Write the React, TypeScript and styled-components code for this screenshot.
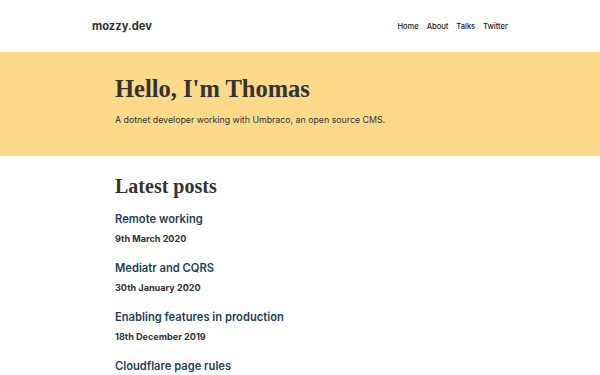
import React from "react";
import styled, { createGlobalStyle } from "styled-components";

const Global = createGlobalStyle`
  html, body { margin: 0; padding: 0; background: #fff; }
  body { font-family: Inter, "Liberation Sans", sans-serif; color: #333; }
  * { box-sizing: border-box; }
`;

const Header = styled.header`
  height: 52px;
  display: flex;
  align-items: center;
  justify-content: space-between;
  width: 416px;
  margin: 0 auto;
`;

const Logo = styled.a`
  font-family: Inter, "Liberation Sans", sans-serif;
  font-weight: 700;
  font-size: 11.2px;
  color: #333;
  text-decoration: none;
`;

const Nav = styled.nav`
  display: flex;
  gap: 7.8px;
`;

const NavLink = styled.a`
  font-size: 7.6px;
  font-weight: 500;
  color: #222;
  text-decoration: none;
`;

const Hero = styled.section`
  background: #fdd98a;
  height: 104px;
`;

const Container = styled.div`
  width: 370px;
  margin: 0 auto;
`;

const HeroInner = styled(Container)`
  padding-top: 22px;
`;

const Title = styled.h1`
  font-family: "Liberation Serif", "DejaVu Serif", serif;
  font-weight: 700;
  font-size: 24.5px;
  line-height: 30px;
  margin: 0;
  color: #333;
`;

const Subtitle = styled.p`
  margin: 10px 0 0;
  font-size: 8.8px;
  color: #333;
`;

const Main = styled(Container)`
  padding-top: 19px;
`;

const SectionTitle = styled.h2`
  font-family: "Liberation Serif", "DejaVu Serif", serif;
  font-weight: 700;
  font-size: 20px;
  line-height: 23px;
  margin: 0 0 13px;
  color: #333;
`;

const Post = styled.article`
  margin-bottom: 15px;
`;

const PostTitle = styled.a`
  display: block;
  font-size: 11.2px;
  font-weight: 600;
  color: #1d3f5e;
  text-decoration: none;
  line-height: 16px;
`;

const PostDate = styled.div`
  margin-top: 6px;
  font-size: 9.1px;
  font-weight: 700;
  color: #333;
  line-height: 12px;
`;

const posts = [
  { title: "Remote working", date: "9th March 2020" },
  { title: "Mediatr and CQRS", date: "30th January 2020" },
  { title: "Enabling features in production", date: "18th December 2019" },
  { title: "Cloudflare page rules", date: "" },
];

export default function App() {
  return (
    <>
      <Global />
      <Header>
        <Logo href="#">mozzy.dev</Logo>
        <Nav>
          <NavLink href="#">Home</NavLink>
          <NavLink href="#">About</NavLink>
          <NavLink href="#">Talks</NavLink>
          <NavLink href="#">Twitter</NavLink>
        </Nav>
      </Header>
      <Hero>
        <HeroInner>
          <Title>Hello, I'm Thomas</Title>
          <Subtitle>A dotnet developer working with Umbraco, an open source CMS.</Subtitle>
        </HeroInner>
      </Hero>
      <Main>
        <SectionTitle>Latest posts</SectionTitle>
        {posts.map((p) => (
          <Post key={p.title}>
            <PostTitle href="#">{p.title}</PostTitle>
            {p.date && <PostDate>{p.date}</PostDate>}
          </Post>
        ))}
      </Main>
    </>
  );
}
